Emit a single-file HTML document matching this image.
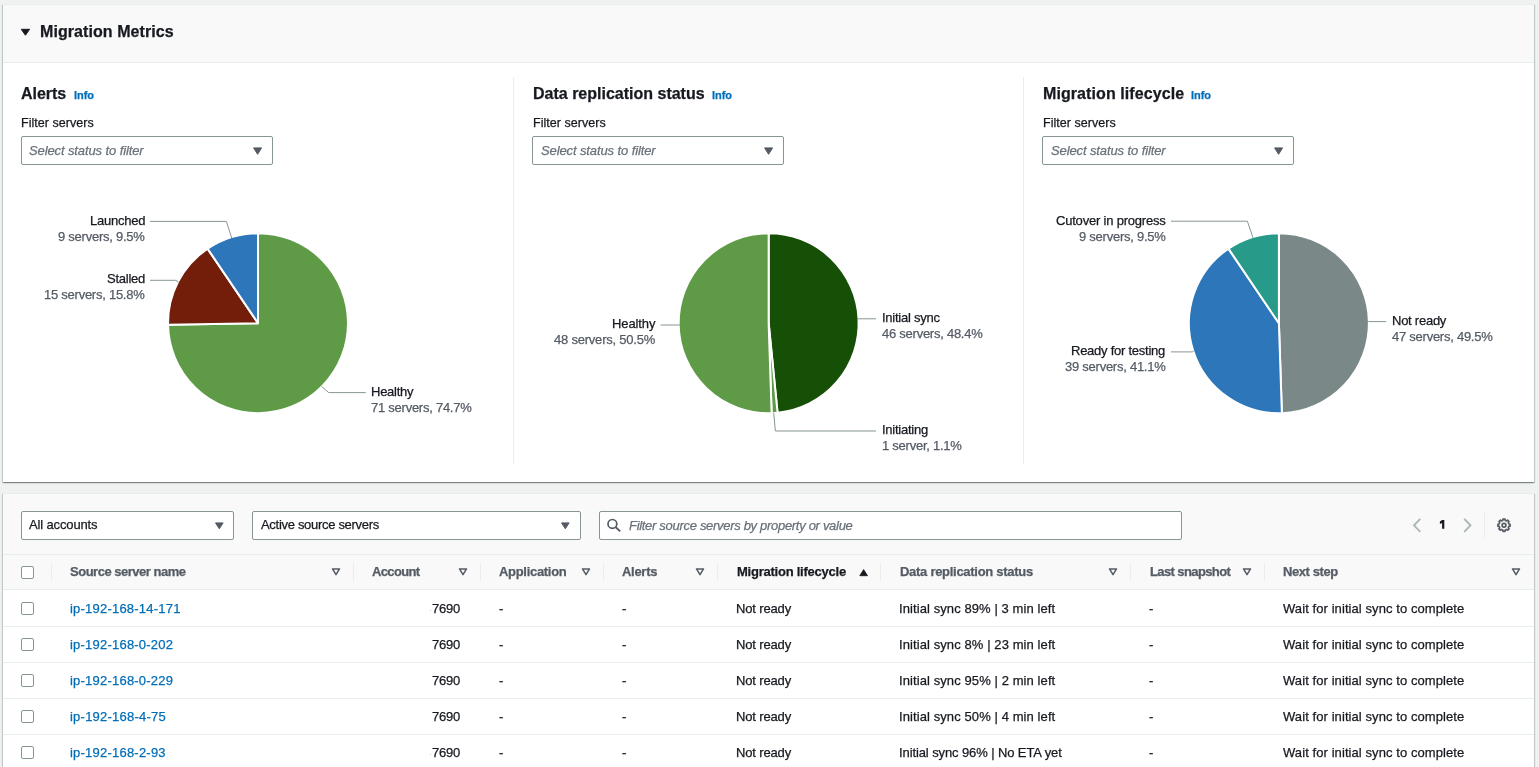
<!DOCTYPE html><html><head><meta charset="utf-8"><style>
html,body{margin:0;padding:0;width:1539px;height:767px;overflow:hidden;background:#f0f2f1;font-family:"Liberation Sans", sans-serif;}
.t{position:absolute;white-space:nowrap;font-family:"Liberation Sans", sans-serif;will-change:transform;-webkit-text-stroke:0.25px currentColor;}
</style></head><body>
<div style="position:absolute;left:3px;top:4px;width:1531px;height:478px;box-sizing:border-box;border-top:1px solid #eaeded;background:#fff;box-shadow:0 1px 1px 0 rgba(0,28,36,.3),1px 1px 1px 0 rgba(0,28,36,.15),-1px 1px 1px 0 rgba(0,28,36,.15);"></div>
<div style="position:absolute;left:3px;top:5px;width:1531px;height:57px;background:#f9f9f9;border-bottom:1px solid #eaeded;"></div>
<svg style="position:absolute;left:0;top:0" width="40" height="40"><path d="M21.3 29.3 L29.6 29.3 L25.45 35.2 Z" fill="#16191f" stroke="#16191f" stroke-width="1" stroke-linejoin="round"/></svg>
<div class="t" style="left:40.20px;top:24px;font-size:16px;line-height:16px;color:#16191f;font-weight:bold;font-style:normal;letter-spacing:0.072px;">Migration Metrics</div>
<div class="t" style="left:21.10px;top:86px;font-size:16px;line-height:16px;color:#16191f;font-weight:bold;font-style:normal;letter-spacing:-0.030px;">Alerts</div>
<div class="t" style="left:73.90px;top:90px;font-size:11px;line-height:11px;color:#006eb9;font-weight:bold;font-style:normal;letter-spacing:-0.050px;">Info</div>
<div class="t" style="left:21.20px;top:117px;font-size:12.5px;line-height:12.5px;color:#16191f;font-weight:normal;font-style:normal;letter-spacing:0.042px;">Filter servers</div>
<div style="position:absolute;left:21px;top:136px;width:252px;height:29px;box-sizing:border-box;border:1px solid #879596;border-radius:2px;background:#fff;"></div>
<div class="t" style="left:29.30px;top:144px;font-size:13px;line-height:13px;color:#687078;font-weight:normal;font-style:italic;letter-spacing:-0.109px;">Select status to filter</div>
<svg style="position:absolute;left:252.80px;top:147px" width="10" height="8"><path d="M0.6 0.9 L8.6 0.9 L4.6 7.3 Z" fill="#545b64" stroke="#545b64" stroke-width="1" stroke-linejoin="round"/></svg>
<div class="t" style="left:532.60px;top:86px;font-size:16px;line-height:16px;color:#16191f;font-weight:bold;font-style:normal;">Data replication status</div>
<div class="t" style="left:711.80px;top:90px;font-size:11px;line-height:11px;color:#006eb9;font-weight:bold;font-style:normal;letter-spacing:-0.050px;">Info</div>
<div class="t" style="left:532.70px;top:117px;font-size:12.5px;line-height:12.5px;color:#16191f;font-weight:normal;font-style:normal;letter-spacing:0.042px;">Filter servers</div>
<div style="position:absolute;left:532px;top:136px;width:252px;height:29px;box-sizing:border-box;border:1px solid #879596;border-radius:2px;background:#fff;"></div>
<div class="t" style="left:540.80px;top:144px;font-size:13px;line-height:13px;color:#687078;font-weight:normal;font-style:italic;letter-spacing:-0.109px;">Select status to filter</div>
<svg style="position:absolute;left:763.80px;top:147px" width="10" height="8"><path d="M0.6 0.9 L8.6 0.9 L4.6 7.3 Z" fill="#545b64" stroke="#545b64" stroke-width="1" stroke-linejoin="round"/></svg>
<div class="t" style="left:1043.00px;top:86px;font-size:16px;line-height:16px;color:#16191f;font-weight:bold;font-style:normal;letter-spacing:0.083px;">Migration lifecycle</div>
<div class="t" style="left:1191.30px;top:90px;font-size:11px;line-height:11px;color:#006eb9;font-weight:bold;font-style:normal;letter-spacing:-0.050px;">Info</div>
<div class="t" style="left:1043.10px;top:117px;font-size:12.5px;line-height:12.5px;color:#16191f;font-weight:normal;font-style:normal;letter-spacing:0.042px;">Filter servers</div>
<div style="position:absolute;left:1042px;top:136px;width:252px;height:29px;box-sizing:border-box;border:1px solid #879596;border-radius:2px;background:#fff;"></div>
<div class="t" style="left:1051.20px;top:144px;font-size:13px;line-height:13px;color:#687078;font-weight:normal;font-style:italic;letter-spacing:-0.109px;">Select status to filter</div>
<svg style="position:absolute;left:1273.80px;top:147px" width="10" height="8"><path d="M0.6 0.9 L8.6 0.9 L4.6 7.3 Z" fill="#545b64" stroke="#545b64" stroke-width="1" stroke-linejoin="round"/></svg>
<div style="position:absolute;left:513px;top:77px;width:1px;height:387px;background:#eaeded;"></div>
<div style="position:absolute;left:1023px;top:77px;width:1px;height:387px;background:#eaeded;"></div>
<svg style="position:absolute;left:0;top:0" width="1539" height="767"><path d="M258,323.15 L258.000,233.150 A90,90 0 1 1 168.012,324.638 Z" fill="#5f9b47" stroke="#fff" stroke-width="2" stroke-linejoin="round"/><path d="M258,323.15 L168.012,324.638 A90,90 0 0 1 207.536,248.629 Z" fill="#721e0a" stroke="#fff" stroke-width="2" stroke-linejoin="round"/><path d="M258,323.15 L207.536,248.629 A90,90 0 0 1 258.000,233.150 Z" fill="#2d76ba" stroke="#fff" stroke-width="2" stroke-linejoin="round"/></svg>
<svg style="position:absolute;left:0;top:0" width="1539" height="767"><path d="M231.70,238.00 L226.40,221.40 L150.00,221.40" fill="none" stroke="#879596" stroke-width="1"/></svg>
<div class="t" style="right:1394.24px;top:214px;font-size:13px;line-height:13px;color:#16191f;font-weight:normal;font-style:normal;letter-spacing:-0.250px;">Launched</div>
<div class="t" style="right:1394.24px;top:230px;font-size:13px;line-height:13px;color:#545b64;font-weight:normal;font-style:normal;letter-spacing:-0.250px;">9 servers, 9.5%</div>
<svg style="position:absolute;left:0;top:0" width="1539" height="767"><path d="M178.60,282.00 L175.70,280.30 L150.00,280.30" fill="none" stroke="#879596" stroke-width="1"/></svg>
<div class="t" style="right:1394.25px;top:272px;font-size:13px;line-height:13px;color:#16191f;font-weight:normal;font-style:normal;letter-spacing:-0.250px;">Stalled</div>
<div class="t" style="right:1394.23px;top:288px;font-size:13px;line-height:13px;color:#545b64;font-weight:normal;font-style:normal;letter-spacing:-0.250px;">15 servers, 15.8%</div>
<svg style="position:absolute;left:0;top:0" width="1539" height="767"><path d="M321.60,386.40 L328.70,392.60 L365.70,392.60" fill="none" stroke="#879596" stroke-width="1"/></svg>
<div class="t" style="left:370.80px;top:385px;font-size:13px;line-height:13px;color:#16191f;font-weight:normal;font-style:normal;letter-spacing:-0.250px;">Healthy</div>
<div class="t" style="left:370.80px;top:401px;font-size:13px;line-height:13px;color:#545b64;font-weight:normal;font-style:normal;letter-spacing:-0.250px;">71 servers, 74.7%</div>
<svg style="position:absolute;left:0;top:0" width="1539" height="767"><path d="M768.65,323.2 L768.650,233.200 A90,90 0 0 1 777.564,412.757 Z" fill="#164f06" stroke="#fff" stroke-width="2" stroke-linejoin="round"/><path d="M768.65,323.2 L777.564,412.757 A90,90 0 0 1 771.626,413.151 Z" fill="#5f9b47" stroke="#fff" stroke-width="2" stroke-linejoin="round"/><path d="M768.65,323.2 L771.626,413.151 A90,90 0 1 1 768.650,233.200 Z" fill="#5f9b47" stroke="#fff" stroke-width="2" stroke-linejoin="round"/></svg>
<svg style="position:absolute;left:0;top:0" width="1539" height="767"><path d="M857.60,318.80 L876.00,318.80" fill="none" stroke="#879596" stroke-width="1"/></svg>
<div class="t" style="left:881.50px;top:311px;font-size:13px;line-height:13px;color:#16191f;font-weight:normal;font-style:normal;letter-spacing:-0.250px;">Initial sync</div>
<div class="t" style="left:881.50px;top:327px;font-size:13px;line-height:13px;color:#545b64;font-weight:normal;font-style:normal;letter-spacing:-0.250px;">46 servers, 48.4%</div>
<svg style="position:absolute;left:0;top:0" width="1539" height="767"><path d="M773.70,412.70 L775.40,431.00 L876.00,431.00" fill="none" stroke="#879596" stroke-width="1"/></svg>
<div class="t" style="left:881.50px;top:423px;font-size:13px;line-height:13px;color:#16191f;font-weight:normal;font-style:normal;letter-spacing:-0.250px;">Initiating</div>
<div class="t" style="left:881.50px;top:439px;font-size:13px;line-height:13px;color:#545b64;font-weight:normal;font-style:normal;letter-spacing:-0.250px;">1 server, 1.1%</div>
<svg style="position:absolute;left:0;top:0" width="1539" height="767"><path d="M679.80,325.00 L660.60,325.00" fill="none" stroke="#879596" stroke-width="1"/></svg>
<div class="t" style="right:883.44px;top:317px;font-size:13px;line-height:13px;color:#16191f;font-weight:normal;font-style:normal;letter-spacing:-0.117px;">Healthy</div>
<div class="t" style="right:883.49px;top:333px;font-size:13px;line-height:13px;color:#545b64;font-weight:normal;font-style:normal;letter-spacing:-0.216px;">48 servers, 50.5%</div>
<svg style="position:absolute;left:0;top:0" width="1539" height="767"><path d="M1278.9,323.2 L1278.900,233.200 A90,90 0 0 1 1281.876,413.151 Z" fill="#7b8888" stroke="#fff" stroke-width="2" stroke-linejoin="round"/><path d="M1278.9,323.2 L1281.876,413.151 A90,90 0 0 1 1228.436,248.679 Z" fill="#2d76ba" stroke="#fff" stroke-width="2" stroke-linejoin="round"/><path d="M1278.9,323.2 L1228.436,248.679 A90,90 0 0 1 1278.900,233.200 Z" fill="#279a8a" stroke="#fff" stroke-width="2" stroke-linejoin="round"/></svg>
<svg style="position:absolute;left:0;top:0" width="1539" height="767"><path d="M1253.00,237.80 L1247.40,221.20 L1171.00,221.20" fill="none" stroke="#879596" stroke-width="1"/></svg>
<div class="t" style="right:373.52px;top:214px;font-size:13px;line-height:13px;color:#16191f;font-weight:normal;font-style:normal;letter-spacing:-0.203px;">Cutover in progress</div>
<div class="t" style="right:373.54px;top:230px;font-size:13px;line-height:13px;color:#545b64;font-weight:normal;font-style:normal;letter-spacing:-0.250px;">9 servers, 9.5%</div>
<svg style="position:absolute;left:0;top:0" width="1539" height="767"><path d="M1368.30,321.60 L1386.20,321.60" fill="none" stroke="#879596" stroke-width="1"/></svg>
<div class="t" style="left:1391.80px;top:314px;font-size:13px;line-height:13px;color:#16191f;font-weight:normal;font-style:normal;letter-spacing:-0.250px;">Not ready</div>
<div class="t" style="left:1391.80px;top:330px;font-size:13px;line-height:13px;color:#545b64;font-weight:normal;font-style:normal;letter-spacing:-0.250px;">47 servers, 49.5%</div>
<svg style="position:absolute;left:0;top:0" width="1539" height="767"><path d="M1194.00,350.50 L1192.80,351.90 L1171.00,351.90" fill="none" stroke="#879596" stroke-width="1"/></svg>
<div class="t" style="right:373.53px;top:344px;font-size:13px;line-height:13px;color:#16191f;font-weight:normal;font-style:normal;letter-spacing:-0.250px;">Ready for testing</div>
<div class="t" style="right:373.53px;top:360px;font-size:13px;line-height:13px;color:#545b64;font-weight:normal;font-style:normal;letter-spacing:-0.250px;">39 servers, 41.1%</div>
<div style="position:absolute;left:3px;top:493px;width:1531px;height:300px;box-sizing:border-box;border-top:1px solid #eaeded;background:#fff;box-shadow:0 1px 1px 0 rgba(0,28,36,.3),1px 1px 1px 0 rgba(0,28,36,.15),-1px 1px 1px 0 rgba(0,28,36,.15);"></div>
<div style="position:absolute;left:3px;top:494px;width:1531px;height:95px;background:#f9f9f9;"></div>
<div style="position:absolute;left:3px;top:554px;width:1531px;height:1px;background:#eaeded;"></div>
<div style="position:absolute;left:3px;top:589px;width:1531px;height:1px;background:#eaeded;"></div>
<div style="position:absolute;left:21px;top:511px;width:213px;height:29px;box-sizing:border-box;border:1px solid #879596;border-radius:2px;background:#fff;"></div>
<div class="t" style="left:29.20px;top:518px;font-size:13px;line-height:13px;color:#16191f;font-weight:normal;font-style:normal;letter-spacing:-0.136px;">All accounts</div>
<svg style="position:absolute;left:214.80px;top:521.7px" width="10" height="8"><path d="M0.5 0.9 L8.1 0.9 L4.3 6.8 Z" fill="#545b64" stroke="#545b64" stroke-width="1" stroke-linejoin="round"/></svg>
<div style="position:absolute;left:252px;top:511px;width:329px;height:29px;box-sizing:border-box;border:1px solid #879596;border-radius:2px;background:#fff;"></div>
<div class="t" style="left:260.80px;top:518px;font-size:13px;line-height:13px;color:#16191f;font-weight:normal;font-style:normal;letter-spacing:-0.302px;">Active source servers</div>
<svg style="position:absolute;left:561.00px;top:521.7px" width="10" height="8"><path d="M0.5 0.9 L8.1 0.9 L4.3 6.8 Z" fill="#545b64" stroke="#545b64" stroke-width="1" stroke-linejoin="round"/></svg>
<div style="position:absolute;left:599px;top:511px;width:583px;height:29px;box-sizing:border-box;border:1px solid #879596;border-radius:2px;background:#fff;"></div>
<svg style="position:absolute;left:605px;top:518px" width="18" height="16"><circle cx="7.4" cy="5.9" r="4.4" fill="none" stroke="#545b64" stroke-width="1.7"/><path d="M10.5 9 L15.2 13.4" stroke="#545b64" stroke-width="1.8"/></svg>
<div class="t" style="left:629.10px;top:519px;font-size:13px;line-height:13px;color:#687078;font-weight:normal;font-style:italic;letter-spacing:-0.304px;">Filter source servers by property or value</div>
<svg style="position:absolute;left:0;top:0" width="1539" height="767"><path d="M1420.3 518.8 L1414 525.3 L1420.3 531.8" fill="none" stroke="#aab7b8" stroke-width="1.9"/><path d="M1464.2 518.8 L1470.5 525.3 L1464.2 531.8" fill="none" stroke="#aab7b8" stroke-width="1.9"/><path d="M1442.1 520.1 L1444.3 520.1 L1444.3 528.8 L1442.1 528.8 L1442.1 522.9 L1439.9 523.9 L1439.9 521.6 Z" fill="#16191f"/></svg>
<div style="position:absolute;left:1484px;top:511px;width:1px;height:28px;background:#eaeded;"></div>
<svg style="position:absolute;left:0;top:0" width="1539" height="767"><path d="M1502.79,520.35 L1503.03,519.08 L1504.97,519.08 L1505.21,520.35 L1506.58,520.91 L1507.64,520.18 L1509.02,521.56 L1508.29,522.62 L1508.85,523.99 L1510.12,524.23 L1510.12,526.17 L1508.85,526.41 L1508.29,527.78 L1509.02,528.84 L1507.64,530.22 L1506.58,529.49 L1505.21,530.05 L1504.97,531.32 L1503.03,531.32 L1502.79,530.05 L1501.42,529.49 L1500.36,530.22 L1498.98,528.84 L1499.71,527.78 L1499.15,526.41 L1497.88,526.17 L1497.88,524.23 L1499.15,523.99 L1499.71,522.62 L1498.98,521.56 L1500.36,520.18 L1501.42,520.91 Z" fill="none" stroke="#545b64" stroke-width="1.7" stroke-linejoin="round"/><circle cx="1504" cy="525.2" r="1.9" fill="none" stroke="#545b64" stroke-width="1.7"/></svg>
<div style="position:absolute;left:21px;top:566px;width:13px;height:13px;box-sizing:border-box;border:1px solid #879596;border-radius:2px;background:#fff;"></div>
<div style="position:absolute;left:51px;top:563px;width:1px;height:18px;background:#eaeded;"></div>
<div style="position:absolute;left:353px;top:563px;width:1px;height:18px;background:#eaeded;"></div>
<div style="position:absolute;left:480px;top:563px;width:1px;height:18px;background:#eaeded;"></div>
<div style="position:absolute;left:603px;top:563px;width:1px;height:18px;background:#eaeded;"></div>
<div style="position:absolute;left:717px;top:563px;width:1px;height:18px;background:#eaeded;"></div>
<div style="position:absolute;left:880px;top:563px;width:1px;height:18px;background:#eaeded;"></div>
<div style="position:absolute;left:1130px;top:563px;width:1px;height:18px;background:#eaeded;"></div>
<div style="position:absolute;left:1264px;top:563px;width:1px;height:18px;background:#eaeded;"></div>
<div class="t" style="left:69.60px;top:565px;font-size:13px;line-height:13px;color:#545b64;font-weight:bold;font-style:normal;letter-spacing:-0.488px;">Source server name</div>
<svg style="position:absolute;left:331.00px;top:567px" width="11" height="10"><path d="M1.5 1.9 L8.5 1.9 L5 7.7 Z" fill="none" stroke="#545b64" stroke-width="1.5" stroke-linejoin="round"/></svg>
<div class="t" style="left:371.80px;top:565px;font-size:13px;line-height:13px;color:#545b64;font-weight:bold;font-style:normal;letter-spacing:-0.633px;">Account</div>
<svg style="position:absolute;left:457.90px;top:567px" width="11" height="10"><path d="M1.5 1.9 L8.5 1.9 L5 7.7 Z" fill="none" stroke="#545b64" stroke-width="1.5" stroke-linejoin="round"/></svg>
<div class="t" style="left:498.80px;top:565px;font-size:13px;line-height:13px;color:#545b64;font-weight:bold;font-style:normal;letter-spacing:-0.305px;">Application</div>
<svg style="position:absolute;left:580.70px;top:567px" width="11" height="10"><path d="M1.5 1.9 L8.5 1.9 L5 7.7 Z" fill="none" stroke="#545b64" stroke-width="1.5" stroke-linejoin="round"/></svg>
<div class="t" style="left:621.60px;top:565px;font-size:13px;line-height:13px;color:#545b64;font-weight:bold;font-style:normal;letter-spacing:-0.290px;">Alerts</div>
<svg style="position:absolute;left:695.30px;top:567px" width="11" height="10"><path d="M1.5 1.9 L8.5 1.9 L5 7.7 Z" fill="none" stroke="#545b64" stroke-width="1.5" stroke-linejoin="round"/></svg>
<div class="t" style="left:736.50px;top:565px;font-size:13px;line-height:13px;color:#16191f;font-weight:bold;font-style:normal;letter-spacing:-0.239px;">Migration lifecycle</div>
<div class="t" style="left:899.70px;top:565px;font-size:13px;line-height:13px;color:#545b64;font-weight:bold;font-style:normal;letter-spacing:-0.282px;">Data replication status</div>
<svg style="position:absolute;left:1107.70px;top:567px" width="11" height="10"><path d="M1.5 1.9 L8.5 1.9 L5 7.7 Z" fill="none" stroke="#545b64" stroke-width="1.5" stroke-linejoin="round"/></svg>
<div class="t" style="left:1149.60px;top:565px;font-size:13px;line-height:13px;color:#545b64;font-weight:bold;font-style:normal;letter-spacing:-0.608px;">Last snapshot</div>
<svg style="position:absolute;left:1241.80px;top:567px" width="11" height="10"><path d="M1.5 1.9 L8.5 1.9 L5 7.7 Z" fill="none" stroke="#545b64" stroke-width="1.5" stroke-linejoin="round"/></svg>
<div class="t" style="left:1283.40px;top:565px;font-size:13px;line-height:13px;color:#545b64;font-weight:bold;font-style:normal;letter-spacing:-0.412px;">Next step</div>
<svg style="position:absolute;left:1510.90px;top:567px" width="11" height="10"><path d="M1.5 1.9 L8.5 1.9 L5 7.7 Z" fill="none" stroke="#545b64" stroke-width="1.5" stroke-linejoin="round"/></svg>
<svg style="position:absolute;left:858.5px;top:566.5px" width="11" height="10"><path d="M0.8 8.7 L8.5 8.7 L4.65 2.6 Z" fill="#16191f" stroke="#16191f" stroke-width="0.8" stroke-linejoin="round"/></svg>
<div style="position:absolute;left:21px;top:602px;width:13px;height:13px;box-sizing:border-box;border:1px solid #879596;border-radius:2px;background:#fff;"></div>
<div class="t" style="left:69.90px;top:602px;font-size:13px;line-height:13px;color:#006eb9;font-weight:normal;font-style:normal;letter-spacing:0.216px;">ip-192-168-14-171</div>
<div class="t" style="right:1079.38px;top:602px;font-size:13px;line-height:13px;color:#16191f;font-weight:normal;font-style:normal;letter-spacing:-0.200px;">7690</div>
<div class="t" style="left:498.80px;top:602px;font-size:13px;line-height:13px;color:#16191f;font-weight:normal;font-style:normal;">-</div>
<div class="t" style="left:621.60px;top:602px;font-size:13px;line-height:13px;color:#16191f;font-weight:normal;font-style:normal;">-</div>
<div class="t" style="left:736.40px;top:602px;font-size:13px;line-height:13px;color:#16191f;font-weight:normal;font-style:normal;letter-spacing:-0.144px;">Not ready</div>
<div class="t" style="left:898.80px;top:602px;font-size:13px;line-height:13px;color:#16191f;font-weight:normal;font-style:normal;letter-spacing:0.088px;">Initial sync 89% | 3 min left</div>
<div class="t" style="left:1149.20px;top:602px;font-size:13px;line-height:13px;color:#16191f;font-weight:normal;font-style:normal;">-</div>
<div class="t" style="left:1283.10px;top:602px;font-size:13px;line-height:13px;color:#16191f;font-weight:normal;font-style:normal;letter-spacing:0.081px;">Wait for initial sync to complete</div>
<div style="position:absolute;left:3px;top:626px;width:1531px;height:1px;background:#eaeded;"></div>
<div style="position:absolute;left:430px;top:610px;width:1px;height:1px;background:#c4c6c8;"></div>
<div style="position:absolute;left:21px;top:638px;width:13px;height:13px;box-sizing:border-box;border:1px solid #879596;border-radius:2px;background:#fff;"></div>
<div class="t" style="left:69.90px;top:638px;font-size:13px;line-height:13px;color:#006eb9;font-weight:normal;font-style:normal;letter-spacing:0.217px;">ip-192-168-0-202</div>
<div class="t" style="right:1079.38px;top:638px;font-size:13px;line-height:13px;color:#16191f;font-weight:normal;font-style:normal;letter-spacing:-0.200px;">7690</div>
<div class="t" style="left:498.80px;top:638px;font-size:13px;line-height:13px;color:#16191f;font-weight:normal;font-style:normal;">-</div>
<div class="t" style="left:621.60px;top:638px;font-size:13px;line-height:13px;color:#16191f;font-weight:normal;font-style:normal;">-</div>
<div class="t" style="left:736.40px;top:638px;font-size:13px;line-height:13px;color:#16191f;font-weight:normal;font-style:normal;letter-spacing:-0.144px;">Not ready</div>
<div class="t" style="left:898.80px;top:638px;font-size:13px;line-height:13px;color:#16191f;font-weight:normal;font-style:normal;letter-spacing:0.091px;">Initial sync 8% | 23 min left</div>
<div class="t" style="left:1149.20px;top:638px;font-size:13px;line-height:13px;color:#16191f;font-weight:normal;font-style:normal;">-</div>
<div class="t" style="left:1283.10px;top:638px;font-size:13px;line-height:13px;color:#16191f;font-weight:normal;font-style:normal;letter-spacing:0.081px;">Wait for initial sync to complete</div>
<div style="position:absolute;left:3px;top:662px;width:1531px;height:1px;background:#eaeded;"></div>
<div style="position:absolute;left:21px;top:674px;width:13px;height:13px;box-sizing:border-box;border:1px solid #879596;border-radius:2px;background:#fff;"></div>
<div class="t" style="left:69.90px;top:674px;font-size:13px;line-height:13px;color:#006eb9;font-weight:normal;font-style:normal;letter-spacing:0.217px;">ip-192-168-0-229</div>
<div class="t" style="right:1079.38px;top:674px;font-size:13px;line-height:13px;color:#16191f;font-weight:normal;font-style:normal;letter-spacing:-0.200px;">7690</div>
<div class="t" style="left:498.80px;top:674px;font-size:13px;line-height:13px;color:#16191f;font-weight:normal;font-style:normal;">-</div>
<div class="t" style="left:621.60px;top:674px;font-size:13px;line-height:13px;color:#16191f;font-weight:normal;font-style:normal;">-</div>
<div class="t" style="left:736.40px;top:674px;font-size:13px;line-height:13px;color:#16191f;font-weight:normal;font-style:normal;letter-spacing:-0.144px;">Not ready</div>
<div class="t" style="left:898.80px;top:674px;font-size:13px;line-height:13px;color:#16191f;font-weight:normal;font-style:normal;letter-spacing:0.091px;">Initial sync 95% | 2 min left</div>
<div class="t" style="left:1149.20px;top:674px;font-size:13px;line-height:13px;color:#16191f;font-weight:normal;font-style:normal;">-</div>
<div class="t" style="left:1283.10px;top:674px;font-size:13px;line-height:13px;color:#16191f;font-weight:normal;font-style:normal;letter-spacing:0.081px;">Wait for initial sync to complete</div>
<div style="position:absolute;left:3px;top:698px;width:1531px;height:1px;background:#eaeded;"></div>
<div style="position:absolute;left:21px;top:710px;width:13px;height:13px;box-sizing:border-box;border:1px solid #879596;border-radius:2px;background:#fff;"></div>
<div class="t" style="left:69.90px;top:710px;font-size:13px;line-height:13px;color:#006eb9;font-weight:normal;font-style:normal;letter-spacing:0.236px;">ip-192-168-4-75</div>
<div class="t" style="right:1079.38px;top:710px;font-size:13px;line-height:13px;color:#16191f;font-weight:normal;font-style:normal;letter-spacing:-0.200px;">7690</div>
<div class="t" style="left:498.80px;top:710px;font-size:13px;line-height:13px;color:#16191f;font-weight:normal;font-style:normal;">-</div>
<div class="t" style="left:621.60px;top:710px;font-size:13px;line-height:13px;color:#16191f;font-weight:normal;font-style:normal;">-</div>
<div class="t" style="left:736.40px;top:710px;font-size:13px;line-height:13px;color:#16191f;font-weight:normal;font-style:normal;letter-spacing:-0.144px;">Not ready</div>
<div class="t" style="left:898.80px;top:710px;font-size:13px;line-height:13px;color:#16191f;font-weight:normal;font-style:normal;letter-spacing:0.091px;">Initial sync 50% | 4 min left</div>
<div class="t" style="left:1149.20px;top:710px;font-size:13px;line-height:13px;color:#16191f;font-weight:normal;font-style:normal;">-</div>
<div class="t" style="left:1283.10px;top:710px;font-size:13px;line-height:13px;color:#16191f;font-weight:normal;font-style:normal;letter-spacing:0.081px;">Wait for initial sync to complete</div>
<div style="position:absolute;left:3px;top:734px;width:1531px;height:1px;background:#eaeded;"></div>
<div style="position:absolute;left:21px;top:746px;width:13px;height:13px;box-sizing:border-box;border:1px solid #879596;border-radius:2px;background:#fff;"></div>
<div class="t" style="left:69.90px;top:746px;font-size:13px;line-height:13px;color:#006eb9;font-weight:normal;font-style:normal;letter-spacing:0.221px;">ip-192-168-2-93</div>
<div class="t" style="right:1079.38px;top:746px;font-size:13px;line-height:13px;color:#16191f;font-weight:normal;font-style:normal;letter-spacing:-0.200px;">7690</div>
<div class="t" style="left:498.80px;top:746px;font-size:13px;line-height:13px;color:#16191f;font-weight:normal;font-style:normal;">-</div>
<div class="t" style="left:621.60px;top:746px;font-size:13px;line-height:13px;color:#16191f;font-weight:normal;font-style:normal;">-</div>
<div class="t" style="left:736.40px;top:746px;font-size:13px;line-height:13px;color:#16191f;font-weight:normal;font-style:normal;letter-spacing:-0.144px;">Not ready</div>
<div class="t" style="left:898.80px;top:746px;font-size:13px;line-height:13px;color:#16191f;font-weight:normal;font-style:normal;letter-spacing:-0.104px;">Initial sync 96% | No ETA yet</div>
<div class="t" style="left:1149.20px;top:746px;font-size:13px;line-height:13px;color:#16191f;font-weight:normal;font-style:normal;">-</div>
<div class="t" style="left:1283.10px;top:746px;font-size:13px;line-height:13px;color:#16191f;font-weight:normal;font-style:normal;letter-spacing:0.081px;">Wait for initial sync to complete</div>
<div style="position:absolute;left:3px;top:770px;width:1531px;height:1px;background:#eaeded;"></div>
<div style="position:absolute;left:430px;top:754px;width:1px;height:1px;background:#c4c6c8;"></div>
</body></html>
